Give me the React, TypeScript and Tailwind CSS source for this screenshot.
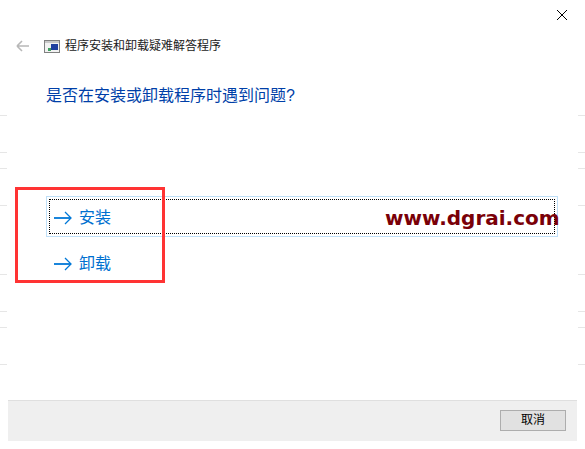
const font = { fontFamily: '"Liberation Sans", "Noto Sans CJK SC", sans-serif' };

// Faint tick marks down both edges of the window
function Ticks({ className }: { className: string }) {
  const tick = "h-px w-[7px] bg-[#e6e6e6]";
  return (
    <div className={`flex w-[8px] shrink-0 flex-col pt-[115px] ${className}`}>
      <div className={tick} />
      <div className={`${tick} mt-[36px]`} />
      <div className={`${tick} mt-[15px]`} />
      <div className={`${tick} mt-[36px]`} />
      <div className={`${tick} mt-[68px]`} />
      <div className={`${tick} mt-[36px]`} />
      <div className={`${tick} mt-[15px]`} />
      <div className={`${tick} mt-[36px]`} />
    </div>
  );
}

function Arrow() {
  return (
    <svg width="18" height="14" viewBox="0 0 18 14" className="shrink-0">
      <path d="M0 7H17" stroke="#0078d7" strokeWidth="1.8" fill="none" />
      <path d="M11 1L17 7L11 13" stroke="#0078d7" strokeWidth="1.3" fill="none" />
    </svg>
  );
}

function Option({ label, focused }: { label: string; focused?: boolean }) {
  return (
    <div
      className={`h-[41px] border p-[2px] ${
        focused ? "border-[#bfdff7]" : "border-transparent"
      }`}
    >
      <div
        className={`flex h-full items-center border border-dotted pl-[4px] pt-[2px] ${
          focused ? "border-black" : "border-transparent"
        }`}
      >
        <Arrow />
        <span className="ml-[7px] text-[16px] text-[#0070d0]">{label}</span>
      </div>
    </div>
  );
}

export default function App() {
  return (
    <div className="flex h-[449px] w-[585px] bg-white" style={font}>
      <Ticks className="items-start" />

      <div className="flex min-w-0 flex-1 flex-col">
        {/* Close */}
        <div className="flex h-[36px] justify-end pr-[10px] pt-[10px]">
          <svg width="10" height="10" viewBox="0 0 10 10">
            <path d="M0 0L10 10M10 0L0 10" stroke="#000" strokeWidth="1" fill="none" />
          </svg>
        </div>

        {/* Title row */}
        <div className="flex h-[20px] items-center pl-[8px]">
          <svg width="13" height="12" viewBox="0 0 13 12">
            <path d="M1 6H13M1 6L6 1M1 6L6 11" stroke="#b8b8b8" strokeWidth="1.6" fill="none" />
          </svg>
          <svg width="16" height="13" viewBox="0 0 16 13" className="ml-[15px]">
            <rect x="0.5" y="0.5" width="15" height="12" fill="#f2f2f2" stroke="#808080" />
            <rect x="1" y="1" width="14" height="2" fill="#c8c8c8" />
            <rect x="7" y="4" width="7" height="6" fill="#1f3f9f" />
            <rect x="4" y="8" width="3" height="3" fill="#3f9f5f" />
          </svg>
          <span className="ml-[5px] text-[12px] text-[#1a1a1a]">程序安装和卸载疑难解答程序</span>
        </div>

        <h1 className="ml-[38px] mt-[28px] text-[16px] font-normal leading-[24px] text-[#003fa8]">
          是否在安装或卸载程序时遇到问题?
        </h1>

        {/* Options */}
        <div className="relative ml-[38px] mr-[19px] mt-[88px] flex flex-col gap-[5px]">
          <Option label="安装" focused />
          <Option label="卸载" />
          <span
            className="absolute left-[339px] top-[8px] text-[20px] font-bold leading-[28px] text-[#7a0008]"
            style={{ fontFamily: '"DejaVu Sans", sans-serif' }}
          >
            www.dgrai.com
          </span>
          <div className="absolute left-[-31px] top-[-9px] h-[96px] w-[150px] border-[3px] border-[#ff3333]" />
        </div>

        {/* Footer */}
        <div className="mb-[8px] mt-auto flex h-[41px] items-start justify-end border-t border-[#dfdfdf] bg-[#efefef] pr-[11px] pt-[9px]">
          <button className="h-[21px] w-[66px] border border-[#adadad] bg-[#e1e1e1] text-[12px] leading-[19px] text-black">
            取消
          </button>
        </div>
      </div>

      <Ticks className="items-end" />
    </div>
  );
}
